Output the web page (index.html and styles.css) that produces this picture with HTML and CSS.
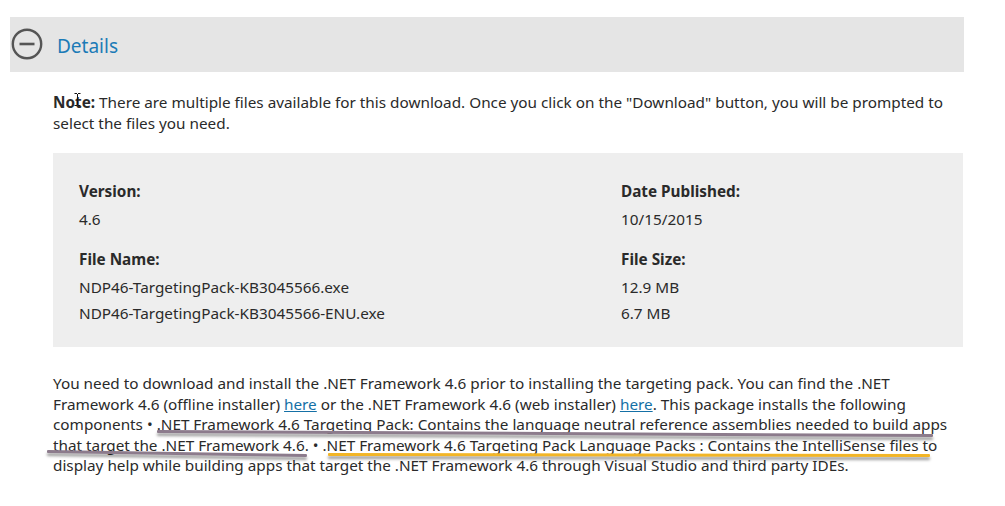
FILE: index.html
```html
<!DOCTYPE html>
<html>
<head>
<meta charset="utf-8">
<link rel="stylesheet" href="styles.css">
</head>
<body>
<div class="page">
  <div class="header">
    <svg class="toggle" width="32" height="32" viewBox="0 0 32 32">
      <circle cx="16" cy="16" r="14.2" fill="none" stroke="#555" stroke-width="2.4"/>
      <line x1="8.5" y1="16" x2="23.5" y2="16" stroke="#555" stroke-width="2.6"/>
    </svg>
    <span class="title">Details</span>
  </div>
  <div class="content">
    <p class="note"><b>Note:</b> There are multiple files available for this download. Once you click on the "Download" button, you will be prompted to<br>select the files you need.
      <svg class="cursor" width="7" height="13" viewBox="0 0 7 13"><path d="M0.5 0.5h2.5M4 0.5h2.5M3.5 1v11M0.5 12.5h2.5M4 12.5h2.5" stroke="#111" stroke-width="1" fill="none"/></svg>
    </p>
    <div class="info">
      <div class="col left">
        <div class="label">Version:</div>
        <div class="value">4.6</div>
        <div class="label spaced">File Name:</div>
        <div class="value">NDP46-TargetingPack-KB3045566.exe</div>
        <div class="value">NDP46-TargetingPack-KB3045566-ENU.exe</div>
      </div>
      <div class="col">
        <div class="label">Date Published:</div>
        <div class="value">10/15/2015</div>
        <div class="label spaced">File Size:</div>
        <div class="value">12.9 MB</div>
        <div class="value">6.7 MB</div>
      </div>
    </div>
    <div class="desc-wrap">
      <p class="desc">You need to download and install the .NET Framework 4.6 prior to installing the targeting pack. You can find the .NET<br>Framework 4.6 (offline installer) <a href="#">here</a> or the .NET Framework 4.6 (web installer) <a href="#">here</a>. This package installs the following<br>components • .NET Framework 4.6 Targeting Pack: Contains the language neutral reference assemblies needed to build apps<br>that target the .NET Framework 4.6. • .NET Framework 4.6 Targeting Pack Language Packs : Contains the IntelliSense files to<br>display help while building apps that target the .NET Framework 4.6 through Visual Studio and third party IDEs.</p>
      <div class="mark purple m1"></div>
      <div class="mark purple m2"></div>
      <div class="mark yellow m3"></div>
      <div class="mark yellow m4"></div>
    </div>
  </div>
</div>
</body>
</html>
```

FILE: styles.css
```css
html, body {
  margin: 0;
  padding: 0;
  background: #ffffff;
}
body {
  font-family: "Noto Sans", "Open Sans", sans-serif;
  color: #2a2a2a;
  font-size: 15.3px;
}
.page {
  padding-top: 17px;
  width: 1005px;
}
.header {
  margin-left: 10px;
  width: 954px;
  height: 55px;
  background: #e5e5e5;
  display: flex;
  align-items: center;
}
.toggle {
  margin-left: 1px;
  margin-top: -1px;
}
.title {
  margin-left: 14px;
  font-size: 19px;
  color: #1b7bb7;
  margin-top: 2px;
}
.content {
  margin-left: 53px;
  width: 910px;
}
.note {
  position: relative;
  margin: 20px 0 0 0;
  line-height: 21px;
  white-space: nowrap;
}
.note b {
  font-weight: 700;
}
.cursor {
  position: absolute;
  left: 21px;
  top: 1px;
}
.info {
  margin-top: 19px;
  background: #eeeeee;
  padding: 25px 0 21px 26px;
  display: grid;
  grid-template-columns: 542px 1fr;
}
.label {
  font-weight: 700;
  line-height: 26px;
  margin-bottom: 2px;
}
.label.spaced {
  margin-top: 14px;
}
.value {
  line-height: 26px;
}
.desc-wrap {
  position: relative;
  margin-top: 26px;
}
.desc {
  margin: 0;
  line-height: 20.5px;
  white-space: nowrap;
}
.desc a {
  color: #1570a6;
  text-decoration: underline;
}
.mark {
  position: absolute;
  height: 3px;
  border-radius: 1px;
  transform-origin: left center;
  box-shadow: 0 3px 3px rgba(0, 0, 0, 0.4);
}
.purple { background: #8c7b8c; }
.yellow { background: #f2b526; }
.m1 { left: 104px; top: 57px; width: 776px; transform: rotate(0.3deg); }
.m2 { left: -6px; top: 77px; width: 260px; transform: rotate(0.9deg); }
.m3 { left: 275px; top: 80px; width: 602px; transform: rotate(0.1deg); }
.m4 { left: 3px; top: 103px; width: 791px; transform: rotate(0.36deg); }
```
